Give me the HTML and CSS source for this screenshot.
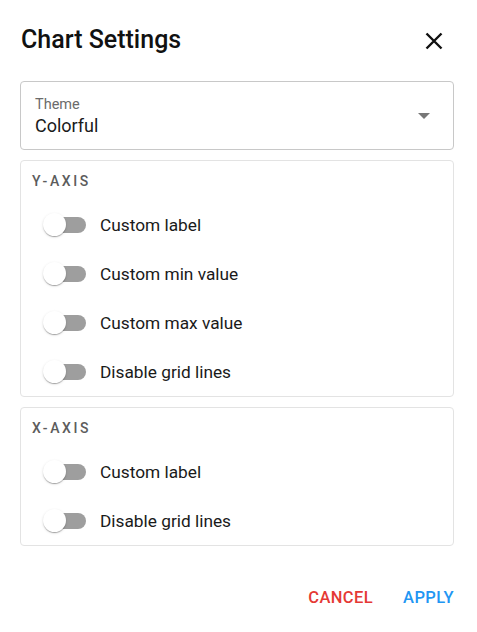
FILE: index.html
```html
<!DOCTYPE html>
<html>
<head>
<meta charset="utf-8">
<link rel="stylesheet" href="styles.css">
</head>
<body>
<div class="dialog">
  <div class="header">
    <h1 class="title">Chart Settings</h1>
    <button class="close" aria-label="close">
      <svg width="18" height="18" viewBox="0 0 18 18"><path d="M1.5 1.5 L16.5 16.5 M16.5 1.5 L1.5 16.5" stroke="#111" stroke-width="2.4" fill="none"/></svg>
    </button>
  </div>
  <div class="select">
    <div class="select-text">
      <div class="select-label">Theme</div>
      <div class="select-value">Colorful</div>
    </div>
    <svg class="arrow" width="12" height="6" viewBox="0 0 12 6"><path d="M0 0 L12 0 L6 6 Z" fill="#777"/></svg>
  </div>
  <div class="section">
    <div class="section-title">Y-AXIS</div>
    <div class="row"><span class="switch"><span class="track"></span><span class="thumb"></span></span><span class="label">Custom label</span></div>
    <div class="row"><span class="switch"><span class="track"></span><span class="thumb"></span></span><span class="label">Custom min value</span></div>
    <div class="row"><span class="switch"><span class="track"></span><span class="thumb"></span></span><span class="label">Custom max value</span></div>
    <div class="row"><span class="switch"><span class="track"></span><span class="thumb"></span></span><span class="label">Disable grid lines</span></div>
  </div>
  <div class="section">
    <div class="section-title">X-AXIS</div>
    <div class="row"><span class="switch"><span class="track"></span><span class="thumb"></span></span><span class="label">Custom label</span></div>
    <div class="row"><span class="switch"><span class="track"></span><span class="thumb"></span></span><span class="label">Disable grid lines</span></div>
  </div>
  <div class="actions">
    <button class="btn cancel">Cancel</button>
    <button class="btn apply">Apply</button>
  </div>
</div>
</body>
</html>
```
FILE: styles.css
```css
html, body {
  margin: 0;
  padding: 0;
  background: #fff;
}
body {
  font-family: Roboto, "Liberation Sans", sans-serif;
  color: #111;
}
.dialog {
  width: 477px;
  padding: 0 23px 0 20px;
  box-sizing: border-box;
}
.header {
  display: flex;
  justify-content: space-between;
  align-items: center;
  height: 81px;
  box-sizing: border-box;
}
.title {
  margin: -2px 0 0 0;
  padding-left: 1px;
  font-size: 25px;
  font-weight: 500;
  line-height: 32px;
}
.close {
  border: 0;
  background: none;
  padding: 0;
  margin-right: 11px;
  width: 18px;
  height: 18px;
  display: flex;
}
.select {
  display: flex;
  align-items: center;
  justify-content: space-between;
  height: 69px;
  border: 1px solid #c8c8c8;
  border-radius: 4px;
  box-sizing: border-box;
  padding: 0 23px 0 14px;
}
.select-text {
  margin-top: 2px;
}
.select-label {
  font-size: 14.5px;
  color: #6b6b6b;
  line-height: 18px;
}
.select-value {
  font-size: 18px;
  line-height: 24px;
  color: #1a1a1a;
}
.arrow {
  display: block;
}
.section {
  margin-top: 10px;
  border: 1px solid #e3e3e3;
  border-radius: 4px;
  padding: 10px 0 0 0;
}
.section-title {
  font-size: 14px;
  font-weight: 500;
  letter-spacing: 2.6px;
  color: #5c5c5c;
  line-height: 20px;
  padding-left: 11px;
  margin-bottom: 9px;
}
.row {
  display: flex;
  align-items: center;
  height: 49px;
  padding-left: 22px;
}
.switch {
  position: relative;
  width: 43px;
  height: 24px;
  flex: none;
}
.track {
  position: absolute;
  left: 2px;
  top: 4px;
  width: 41px;
  height: 16px;
  border-radius: 8px;
  background: #9e9e9e;
}
.thumb {
  position: absolute;
  left: 0;
  top: 0;
  width: 23px;
  height: 23px;
  border-radius: 50%;
  background: #fff;
  box-shadow: 0 2px 1px -1px rgba(0,0,0,.2), 0 1px 1px 0 rgba(0,0,0,.14), 0 1px 3px 0 rgba(0,0,0,.12);
}
.label {
  margin-left: 14px;
  font-size: 17.3px;
  color: #1a1a1a;
}
.actions {
  display: flex;
  justify-content: flex-end;
  gap: 30px;
  margin-top: 40px;
}
.btn {
  border: 0;
  background: none;
  padding: 0;
  font-family: Roboto, "Liberation Sans", sans-serif;
  font-size: 16.5px;
  font-weight: 500;
  text-transform: uppercase;
  letter-spacing: 0.4px;
  line-height: 24px;
}
.cancel { color: #e53935; }
.apply { color: #2196f3; }
```
